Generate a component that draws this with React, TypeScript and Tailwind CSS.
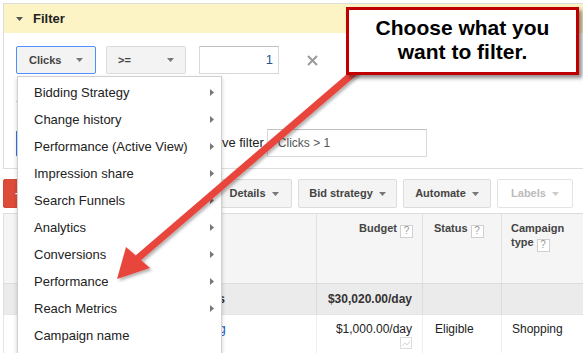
import React from 'react';

function Caret({ color = '#777' }: { color?: string }) {
  return (
    <svg width="7" height="4" viewBox="0 0 7 4" className="shrink-0">
      <path d="M0 0h7L3.5 4z" fill={color} />
    </svg>
  );
}

function SubArrow() {
  return (
    <svg width="4" height="7" viewBox="0 0 4 7" className="shrink-0">
      <path d="M0 0l4 3.5L0 7z" fill="#777" />
    </svg>
  );
}

function Help() {
  return (
    <span className="inline-flex w-[13px] h-[13px] border border-[#d0d0d0] bg-white text-[10px] font-normal text-[#999] items-center justify-center ml-[3px] align-[-2px] leading-none">
      ?
    </span>
  );
}

const menuItems: { label: string; sub: boolean }[] = [
  { label: 'Bidding Strategy', sub: true },
  { label: 'Change history', sub: true },
  { label: 'Performance (Active View)', sub: true },
  { label: 'Impression share', sub: true },
  { label: 'Search Funnels', sub: true },
  { label: 'Analytics', sub: true },
  { label: 'Conversions', sub: true },
  { label: 'Performance', sub: true },
  { label: 'Reach Metrics', sub: true },
  { label: 'Campaign name', sub: false },
];

const toolBtn =
  'h-[29px] flex items-center justify-center gap-[6px] border border-[#dcdcdc] rounded-[2px] bg-[#f4f4f4] text-[11px] font-bold text-[#444]';

export default function App() {
  return (
    <div className="relative w-[583px] h-[353px] overflow-hidden bg-white font-['Liberation_Sans',Arial,sans-serif] text-[#222]">
      <div className="pt-[3px] pl-[3px]">
        {/* filter panel */}
        <div className="w-[640px] border-l border-t border-b border-[#dddddd]">
          <div className="h-[29px] bg-[#fdf4c5] flex items-center pl-[12px] gap-[10px]">
            <Caret color="#555" />
            <span className="text-[13px] font-bold text-[#222]">Filter</span>
          </div>
          <div className="bg-white pt-[13px] pb-[11px] pl-[12px]">
            <div className="flex items-center h-[28px]">
              <div className="w-[80px] h-[28px] flex items-center justify-between px-[12px] border border-[#4d90fe] rounded-[2px] bg-[#f3f3f3] text-[11px] font-bold text-[#444]">
                <span>Clicks</span>
                <Caret />
              </div>
              <div className="ml-[10px] w-[80px] h-[28px] flex items-center justify-between pl-[11px] pr-[11px] border border-[#dcdcdc] rounded-[2px] bg-[#f3f3f3] text-[11px] font-bold text-[#444]">
                <span>&gt;=</span>
                <Caret />
              </div>
              <div className="ml-[13px] w-[80px] h-[28px] flex items-center justify-end pr-[5px] border border-[#d9d9d9] border-t-[#c0c0c0] text-[13px] text-[#2f4f8f]">
                1
              </div>
              <svg width="11" height="11" viewBox="0 0 11 11" className="ml-[28px]">
                <path d="M1 1l9 9M10 1l-9 9" stroke="#9a9a9a" strokeWidth="2" />
              </svg>
            </div>
            <div className="mt-[20px] h-[16px] flex items-center text-[13px] text-[#1155cc]">+</div>
            <div className="mt-[19px] h-[28px] flex items-center">
              <div className="w-[60px] h-[27px] border border-[#3079ed] rounded-[2px] bg-[#4d90fe]" />
              <div className="ml-[8px] w-[66px] h-[27px] border border-[#dcdcdc] rounded-[2px] bg-[#f3f3f3]" />
              <div className="ml-[36px] w-[13px] h-[13px] border border-[#c6c6c6] bg-white" />
              <span className="ml-[7px] text-[13px] text-[#222]">Save filter</span>
              <div className="ml-[3px] w-[160px] h-[28px] flex items-center pl-[10px] border border-[#d9d9d9] border-t-[#c0c0c0] text-[12px] text-[#555]">
                Clicks &gt; 1
              </div>
            </div>
          </div>
        </div>

        {/* toolbar */}
        <div className="mt-[10px] flex items-center gap-[6px]">
          <div className="w-[92px] h-[29px] flex items-center pl-[11px] rounded-[2px] bg-[#dd4b39] border border-[#d14836] text-[11px] font-bold text-white">
            +
          </div>
          <div className={`${toolBtn} w-[109px]`} />
          <div className={`${toolBtn} w-[76px]`}>
            <span>Details</span>
            <Caret />
          </div>
          <div className={`${toolBtn} w-[99px]`}>
            <span>Bid strategy</span>
            <Caret />
          </div>
          <div className={`${toolBtn} w-[88px]`}>
            <span>Automate</span>
            <Caret />
          </div>
          <div className="h-[29px] w-[76px] flex items-center justify-center gap-[6px] border border-[#e3e3e3] rounded-[2px] bg-white text-[11px] font-bold text-[#bbb]">
            <span>Labels</span>
            <Caret color="#ccc" />
          </div>
        </div>

        {/* table */}
        <div className="mt-[5px] w-[640px] border-t border-[#dddddd] text-[12px]">
          <div className="grid grid-cols-[313px_106px_79px_142px] h-[69px] bg-[#f5f5f5] text-[11px] font-bold text-[#444] leading-[14px]">
            <div className="border-l border-[#e0e0e0]" />
            <div className="border-l border-[#e0e0e0] pr-[9px] pt-[7px] text-right">
              Budget
              <Help />
            </div>
            <div className="border-l border-[#e0e0e0] pl-[11px] pt-[7px]">
              Status
              <Help />
            </div>
            <div className="border-l border-[#e0e0e0] pl-[9px] pt-[7px]">
              Campaign
              <br />
              type
              <Help />
            </div>
          </div>
          <div className="grid grid-cols-[313px_106px_79px_142px] h-[31px] bg-[#ebebeb] border-t border-[#dddddd] font-bold text-[#333] items-center">
            <div className="h-full flex items-center border-l border-[#dddddd] pl-[103px]">Total - all campaigns</div>
            <div className="h-full flex items-center justify-end border-l border-[#dddddd] pr-[10px]">$30,020.00/day</div>
            <div className="h-full border-l border-[#dddddd]" />
            <div className="h-full border-l border-[#dddddd]" />
          </div>
          <div className="grid grid-cols-[313px_106px_79px_142px] h-[40px] border-t border-[#e5e5e5] leading-[14px]">
            <div className="border-l border-[#e5e5e5] pl-[99px] pt-[7px] text-[#1155cc]">Shopping - US Catalog</div>
            <div className="border-l border-[#eeeeee] pr-[10px] pt-[7px] flex flex-col items-end">
              <span>$1,000.00/day</span>
              <svg width="12" height="12" viewBox="0 0 12 12" className="mt-[1px]">
                <rect x="0.5" y="0.5" width="11" height="11" fill="white" stroke="#dcdcdc" />
                <path d="M2 9l3-3 2 2 3-4" fill="none" stroke="#d5d5d5" strokeWidth="1" />
              </svg>
            </div>
            <div className="border-l border-[#eeeeee] pl-[12px] pt-[7px]">Eligible</div>
            <div className="border-l border-[#eeeeee] pl-[10px] pt-[7px]">Shopping</div>
          </div>
        </div>
      </div>

      {/* dropdown menu */}
      <div className="absolute left-[17px] top-[76px] w-[205px] h-[300px] bg-white border border-[#d0d0d0] shadow-[0_2px_4px_rgba(0,0,0,0.2)] pt-[2px]">
        {menuItems.map((item) => (
          <div key={item.label} className="h-[27px] flex items-center justify-between pl-[16px] pr-[7px] text-[13px] text-[#222]">
            <span>{item.label}</span>
            {item.sub && <SubArrow />}
          </div>
        ))}
      </div>

      {/* annotation arrow */}
      <svg className="absolute left-0 top-0 pointer-events-none" width="583" height="353" viewBox="0 0 583 353">
        <defs>
          <filter id="sh" x="-20%" y="-20%" width="140%" height="140%">
            <feDropShadow dx="2" dy="2" stdDeviation="1.5" floodColor="#000" floodOpacity="0.3" />
          </filter>
        </defs>
        <g filter="url(#sh)">
          <line x1="356" y1="71" x2="137" y2="259" stroke="#e8453c" strokeWidth="7" />
          <polygon points="117,279 126,247 150,268" fill="#e8453c" />
        </g>
      </svg>

      {/* callout */}
      <div className="absolute left-[346px] top-[7px] w-[233px] h-[68px] border-[3px] border-[#c00000] bg-white shadow-[3px_3px_4px_rgba(0,0,0,0.45)] pt-[6px] text-center text-[21px] leading-[24px] font-bold text-black">
        Choose what you
        <br />
        want to filter.
      </div>
    </div>
  );
}
